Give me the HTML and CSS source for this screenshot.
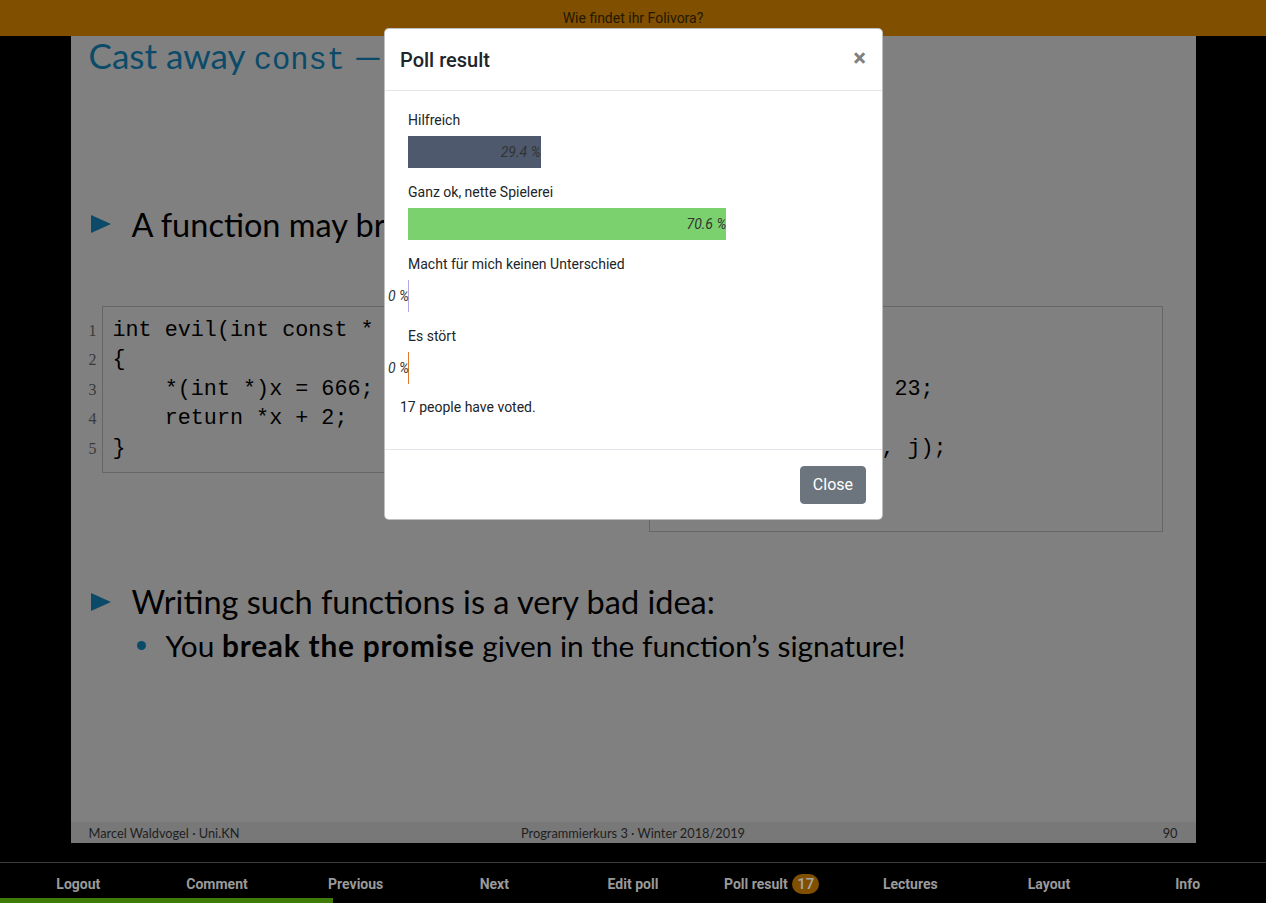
FILE: index.html
```
<!DOCTYPE html>
<html lang="de">
<head>
<meta charset="utf-8">
<title>Poll result</title>
<link rel="stylesheet" href="styles.css">
</head>
<body>
<div class="app">
  <header class="topbar">Wie findet ihr Folivora?</header>

  <main class="stage">
    <section class="slide">
      <h1 class="slide-title">Cast away <span class="tt">const</span> —</h1>

      <div class="bullet">
        <svg class="tri" viewBox="0 0 20 18" width="20" height="18"><polygon points="0,0 20,9 0,18"/></svg>
        <span>A function may break its promise:</span>
      </div>

      <div class="code-row">
        <div class="listing listing-left">
          <div class="lnums"><span>1</span><span>2</span><span>3</span><span>4</span><span>5</span></div>
          <pre class="code">int evil(int const * x)
{
    *(int *)x = 666;
    return *x + 2;
}</pre>
        </div>
        <div class="listing listing-right">
          <div class="lnums"><span>1</span><span>2</span><span>3</span><span>4</span><span>5</span><span>6</span><span>7</span></div>
          <pre class="code">int main()
{
    int const j = 23;
    evil(&amp;j);
    printf("%d\n", j);
    return 0;
}</pre>
        </div>
      </div>

      <div class="bullet bullet-2">
        <svg class="tri" viewBox="0 0 20 18" width="20" height="18"><polygon points="0,0 20,9 0,18"/></svg>
        <span>Writing such functions is a very bad idea:</span>
      </div>
      <div class="subbullet">
        <span class="dot"></span>
        <span>You <b>break the promise</b> given in the function’s signature!</span>
      </div>

      <footer class="slide-foot">
        <span class="sf-left">Marcel Waldvogel · Uni.KN</span>
        <span class="sf-center">Programmierkurs 3 · Winter 2018/2019</span>
        <span class="sf-right">90</span>
      </footer>
    </section>
  </main>

  <nav class="navbar">
    <div class="nav-items">
      <a class="nav-item">Logout</a>
      <a class="nav-item">Comment</a>
      <a class="nav-item">Previous</a>
      <a class="nav-item">Next</a>
      <a class="nav-item">Edit poll</a>
      <a class="nav-item">Poll result <span class="badge">17</span></a>
      <a class="nav-item">Lectures</a>
      <a class="nav-item">Layout</a>
      <a class="nav-item">Info</a>
    </div>
    <div class="progress"><div class="progress-bar" style="width: 26.3%"></div></div>
  </nav>
</div>

<div class="modal">
  <div class="modal-header">
    <h2 class="modal-title">Poll result</h2>
    <span class="close">×</span>
  </div>
  <div class="modal-body">
    <div class="result">
      <div class="r-label">Hilfreich</div>
      <div class="r-track"><div class="r-bar c1" style="width: 29.4%">29.4 %</div></div>
    </div>
    <div class="result">
      <div class="r-label">Ganz ok, nette Spielerei</div>
      <div class="r-track"><div class="r-bar c2" style="width: 70.6%">70.6 %</div></div>
    </div>
    <div class="result">
      <div class="r-label">Macht für mich keinen Unterschied</div>
      <div class="r-track"><div class="r-bar c3" style="width: 0%">0 %</div></div>
    </div>
    <div class="result">
      <div class="r-label">Es stört</div>
      <div class="r-track"><div class="r-bar c4" style="width: 0%">0 %</div></div>
    </div>
    <p class="votes">17 people have voted.</p>
  </div>
  <div class="modal-footer">
    <button class="btn">Close</button>
  </div>
</div>
</body>
</html>
```
FILE: styles.css
```
* { box-sizing: border-box; }
html, body { margin: 0; padding: 0; }
body {
  background: #000;
  font-family: Roboto, "Liberation Sans", sans-serif;
  height: 903px;
  overflow: hidden;
}
.app {
  display: flex;
  flex-direction: column;
  height: 903px;
}
.topbar {
  height: 36px;
  background: #805000;
  color: #241700;
  font-size: 14px;
  line-height: 36px;
  text-align: center;
}
.stage {
  flex: 1;
  display: flex;
  justify-content: center;
  align-items: flex-start;
}
.slide {
  width: 1125px;
  height: 807px;
  background: #808080;
  display: flex;
  flex-direction: column;
  font-family: Lato, "Open Sans", sans-serif;
  color: #000;
}
.slide-title {
  margin: 0 0 0 18px;
  height: 39px;
  line-height: 39px;
  font-size: 35px;
  font-weight: 400;
  color: #0b4b69;
  white-space: nowrap;
}
.tt {
  font-family: "Liberation Mono", monospace;
  font-size: 30.5px;
}
.bullet {
  margin: 129px 0 0 20px;
  display: flex;
  align-items: center;
  gap: 21px;
  height: 40px;
  font-size: 32.5px;
  white-space: nowrap;
}
.tri { fill: #0b4b69; flex: none; }
.code-row {
  margin: 62px 0 0 6px;
  display: flex;
  align-items: flex-start;
  gap: 8px;
}
.listing {
  display: flex;
  align-items: flex-start;
  gap: 5px;
}
.lnums {
  width: 20px;
  padding-top: 10px;
  display: flex;
  flex-direction: column;
  align-items: flex-end;
  font-family: "Liberation Serif", serif;
  font-size: 16px;
  line-height: 29.4px;
  color: #3a3a3a;
}
.code {
  margin: 0;
  width: 514px;
  border: 1px solid #666;
  padding: 9px 10px;
  font-family: "Liberation Mono", monospace;
  font-size: 21.75px;
  line-height: 29.4px;
  color: #000;
}
.bullet-2 { margin-top: 50px; }
.subbullet {
  margin: 6px 0 0 66px;
  display: flex;
  align-items: center;
  gap: 20px;
  height: 36px;
  font-size: 29.8px;
  white-space: nowrap;
}
.subbullet b { font-weight: 700; letter-spacing: 0.8px; }
.dot {
  width: 9px;
  height: 9px;
  border-radius: 50%;
  background: #0b4b69;
  flex: none;
}
.slide-foot {
  margin-top: auto;
  height: 21px;
  background: #787878;
  display: grid;
  grid-template-columns: 1fr auto 1fr;
  align-items: center;
  padding: 0 18px;
  font-size: 12.8px;
  color: #1e1e1e;
}
.sf-right { text-align: right; }

.navbar {
  border-top: 1px solid #3c3c3c;
  background: #000;
}
.nav-items {
  display: grid;
  grid-template-columns: repeat(9, 1fr);
  padding: 11px 9px 4px;
  height: 35px;
}
.nav-item {
  text-align: center;
  font-size: 14px;
  font-weight: 700;
  line-height: 20px;
  color: #9a9a9a;
  white-space: nowrap;
}
.badge {
  display: inline-block;
  background: #805000;
  color: #a8a8a8;
  border-radius: 10px;
  padding: 0 5px;
  font-size: 15px;
  font-weight: 500;
  line-height: 20px;
  margin-left: 1px;
}
.progress { height: 5px; }
.progress-bar { height: 5px; background: #3f7d08; }

.modal {
  position: absolute;
  top: 28px;
  left: 384px;
  width: 499px;
  background: #fff;
  border: 1px solid rgba(0,0,0,.25);
  border-radius: 5px;
  color: #212529;
  font-family: Roboto, "Liberation Sans", sans-serif;
}
.modal-header {
  display: flex;
  justify-content: space-between;
  align-items: flex-start;
  padding: 16px 16px 15px 15px;
  border-bottom: 1px solid #e4e4ea;
}
.modal-title {
  margin: 0;
  font-size: 20px;
  font-weight: 500;
  line-height: 30px;
}
.close {
  font-size: 24px;
  font-weight: 700;
  line-height: 26px;
  color: #808080;
}
.modal-body {
  padding: 19px 15px 32px;
}
.result {
  margin: 0 8px 14px;
}
.r-label {
  font-size: 14px;
  line-height: 20px;
  margin-bottom: 6px;
}
.r-track { height: 32px; }
.r-bar {
  height: 32px;
  min-width: 1px;
  display: flex;
  justify-content: flex-end;
  align-items: center;
  font-size: 14px;
  font-style: italic;
  color: #333;
  white-space: nowrap;
}
.c1 { background: #4e596d; }
.c2 { background: #7bd16e; }
.c3 { background: #b2a8e2; }
.c4 { background: #e07a2a; }
.votes {
  margin: -1px 0 0;
  font-size: 14px;
  line-height: 20px;
}
.modal-footer {
  display: flex;
  justify-content: flex-end;
  padding: 16px 16px 15px;
  border-top: 1px solid #e4e4ea;
}
.btn {
  font-family: Roboto, "Liberation Sans", sans-serif;
  font-size: 16px;
  line-height: 24px;
  padding: 6px 12px;
  border: 1px solid #6c757d;
  background: #6c757d;
  color: #fff;
  border-radius: 4px;
}
```
